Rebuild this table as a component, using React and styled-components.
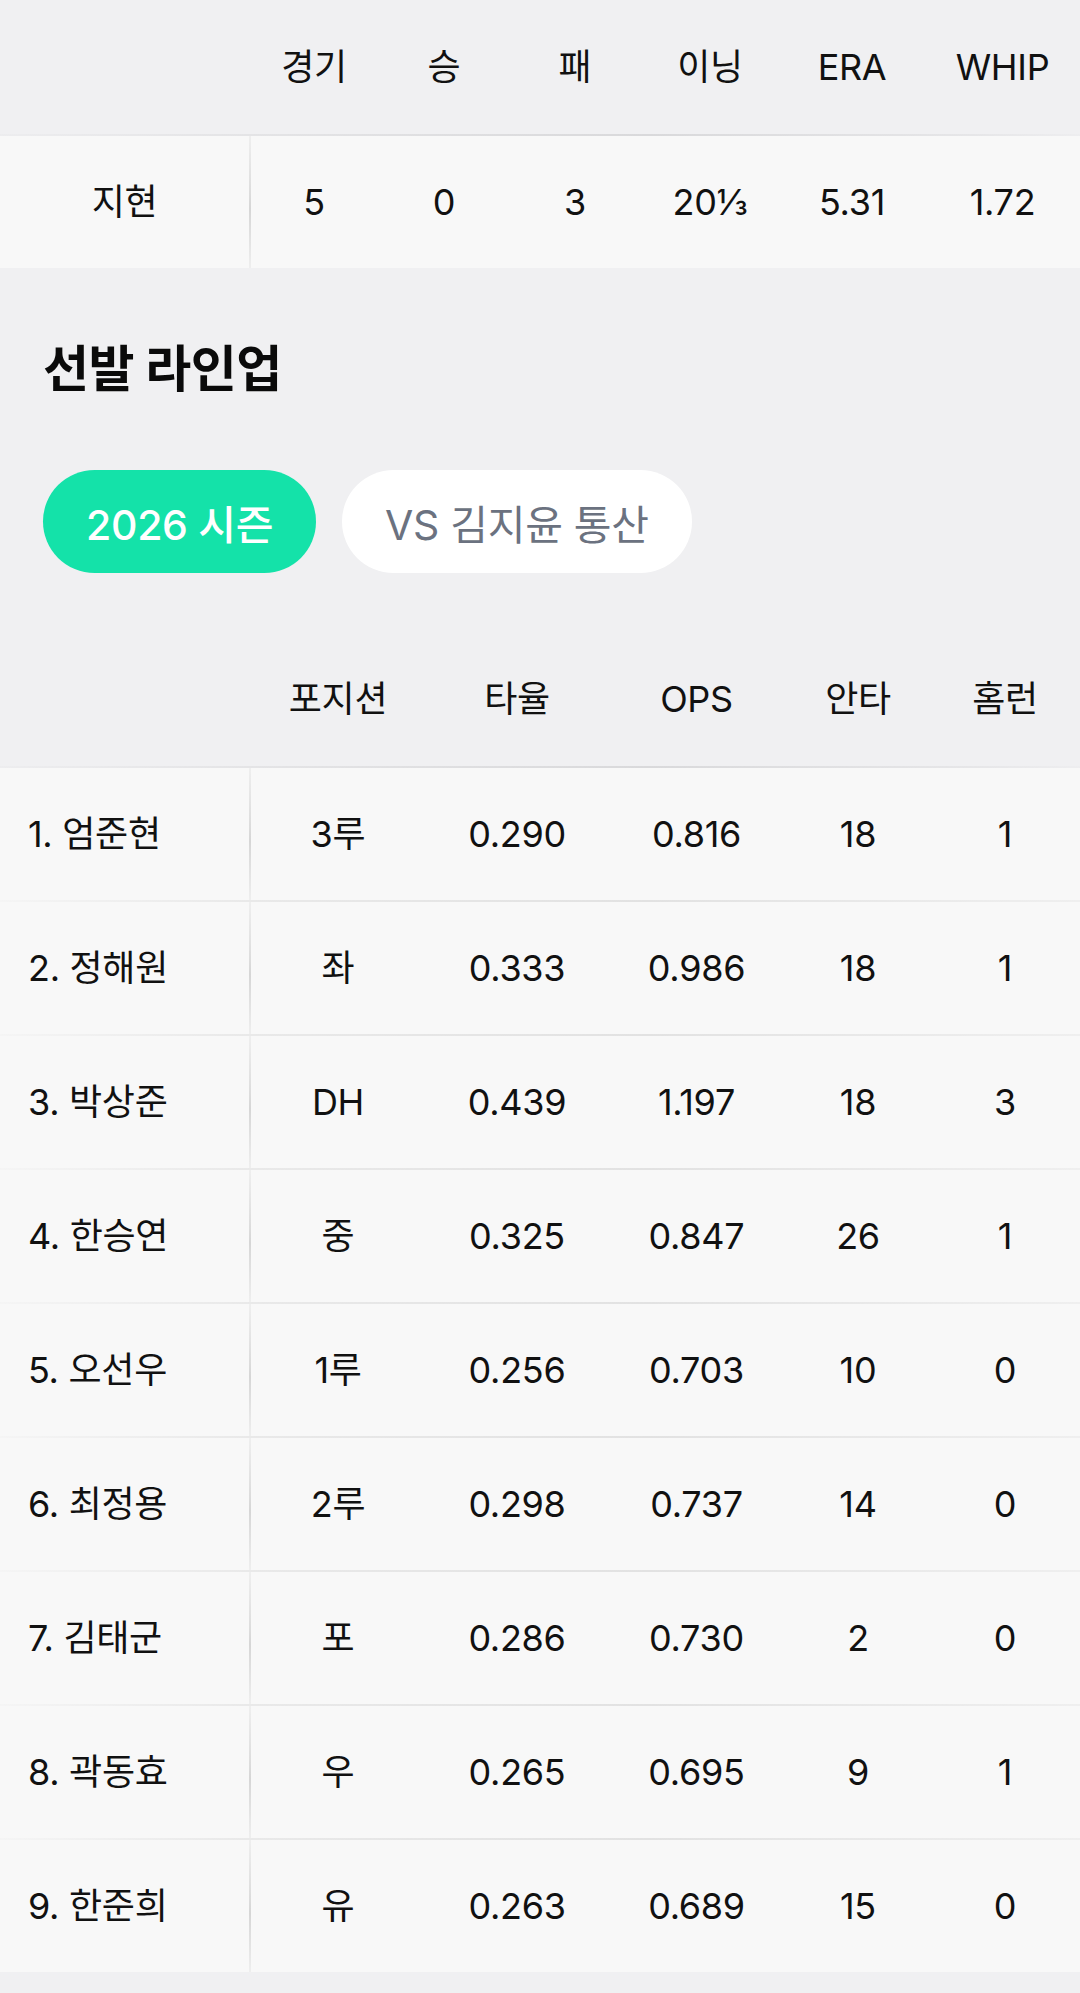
import React from "react";
import styled, { createGlobalStyle } from "styled-components";

const Global = createGlobalStyle`
  html, body { margin: 0; padding: 0; background: #f0f0f2; }
  body { font-family: Inter, "Noto Sans CJK KR", sans-serif; color: #111; }
`;

const Page = styled.div`
  width: 1080px;
  min-height: 1993px;
  background: #f0f0f2;
`;

const Table = styled.div`
  display: flex;
  flex-direction: column;
`;

const Row = styled.div`
  display: grid;
  grid-template-columns: 249px ${(p) => p.$cols};
  height: ${(p) => (p.$header ? "134px" : "132px")};
  background: ${(p) => (p.$header ? "#f0f0f2" : "#f8f8f8")};
  border-bottom: 2px solid;
  border-image: ${(p) =>
      p.$header
        ? "linear-gradient(to right, rgba(232,232,234,0.4) 0%, #e4e4e6 23%, #d9d9db 60%, #e6e6e8 90%, rgba(236,236,238,0.6) 100%)"
        : "linear-gradient(to right, rgba(238,238,238,0.3) 0%, #e9e9e9 23%, #e2e2e2 60%, #efefef 100%)"}
    1;
  &:last-child {
    border-bottom: none;
  }
`;

const Cell = styled.div`
  display: flex;
  align-items: center;
  justify-content: center;
  font-size: 36px;
  line-height: 1;
  white-space: nowrap;
  letter-spacing: -0.3px;
`;

const NameCell = styled(Cell)`
  justify-content: ${(p) => (p.$left ? "flex-start" : "center")};
  padding-left: ${(p) => (p.$left ? "28px" : "0")};
  border-right: ${(p) => (p.$divider ? "2px solid" : "none")};
  border-image: linear-gradient(
      to bottom,
      rgba(225, 225, 225, 0.4),
      #dcdcdc 45%,
      #d6d6d6 55%,
      rgba(225, 225, 225, 0.4)
    )
    1;
  margin-right: ${(p) => (p.$divider ? "-2px" : "0")};
`;

const Section = styled.section`
  padding: 70px 43px 0;
`;

const Title = styled.h2`
  margin: 0;
  font-size: 50px;
  line-height: 62px;
  font-weight: 700;
  letter-spacing: -0.5px;
  color: #0a0a0a;
`;

const Tabs = styled.div`
  display: flex;
  gap: 26px;
  margin-top: 70px;
  margin-bottom: 59px;
`;

const Pill = styled.button`
  height: 103px;
  padding: 0 43px;
  border: none;
  border-radius: 52px;
  font-family: Inter, "Noto Sans CJK KR", sans-serif;
  font-size: 41px;
  letter-spacing: -0.3px;
  background: ${(p) => (p.$active ? "#14e2a9" : "#ffffff")};
  color: ${(p) => (p.$active ? "#ffffff" : "#6b7280")};
  font-weight: ${(p) => (p.$active ? 500 : 400)};
`;

const pitchCols = "130px 130px 132px 138px 146px 155px";
const batCols = "178px 180px 179px 144px 150px";

const lineup = [
  ["1. 엄준현", "3루", "0.290", "0.816", "18", "1"],
  ["2. 정해원", "좌", "0.333", "0.986", "18", "1"],
  ["3. 박상준", "DH", "0.439", "1.197", "18", "3"],
  ["4. 한승연", "중", "0.325", "0.847", "26", "1"],
  ["5. 오선우", "1루", "0.256", "0.703", "10", "0"],
  ["6. 최정용", "2루", "0.298", "0.737", "14", "0"],
  ["7. 김태군", "포", "0.286", "0.730", "2", "0"],
  ["8. 곽동효", "우", "0.265", "0.695", "9", "1"],
  ["9. 한준희", "유", "0.263", "0.689", "15", "0"],
];

export default function App() {
  return (
    <Page>
      <Global />
      <Table>
        <Row $header $cols={pitchCols}>
          <NameCell />
          {["경기", "승", "패", "이닝", "ERA", "WHIP"].map((h) => (
            <Cell key={h}>{h}</Cell>
          ))}
        </Row>
        <Row $cols={pitchCols}>
          <NameCell $divider>지현</NameCell>
          {["5", "0", "3", "20⅓", "5.31", "1.72"].map((v, i) => (
            <Cell key={i}>{v}</Cell>
          ))}
        </Row>
      </Table>

      <Section>
        <Title>선발 라인업</Title>
        <Tabs>
          <Pill $active>2026 시즌</Pill>
          <Pill>VS 김지윤 통산</Pill>
        </Tabs>
      </Section>

      <Table>
        <Row $header $cols={batCols}>
          <NameCell />
          {["포지션", "타율", "OPS", "안타", "홈런"].map((h) => (
            <Cell key={h}>{h}</Cell>
          ))}
        </Row>
        {lineup.map(([name, ...vals]) => (
          <Row key={name} $cols={batCols}>
            <NameCell $left $divider>
              {name}
            </NameCell>
            {vals.map((v, i) => (
              <Cell key={i}>{v}</Cell>
            ))}
          </Row>
        ))}
      </Table>
    </Page>
  );
}
